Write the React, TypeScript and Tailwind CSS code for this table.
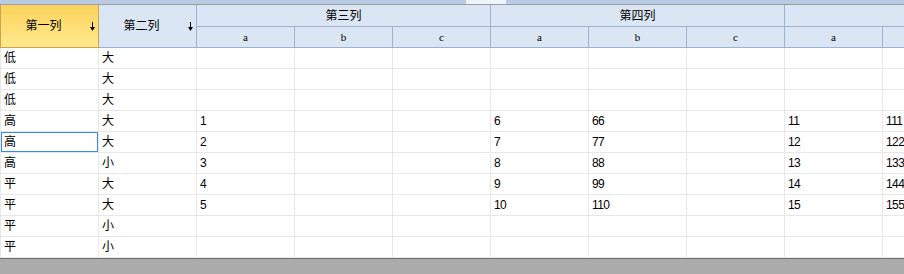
import React from "react";

type Row = {
  level: string;
  size: string;
  cells: string[];
};

const rows: Row[] = [
  { level: "低", size: "大", cells: [] },
  { level: "低", size: "大", cells: [] },
  { level: "低", size: "大", cells: [] },
  { level: "高", size: "大", cells: ["1", "", "", "6", "66", "", "11", "111", ""] },
  { level: "高", size: "大", cells: ["2", "", "", "7", "77", "", "12", "122", ""] },
  { level: "高", size: "小", cells: ["3", "", "", "8", "88", "", "13", "133", ""] },
  { level: "平", size: "大", cells: ["4", "", "", "9", "99", "", "14", "144", ""] },
  { level: "平", size: "大", cells: ["5", "", "", "10", "110", "", "15", "155", ""] },
  { level: "平", size: "小", cells: [] },
  { level: "平", size: "小", cells: [] },
];

// the third band scrolls past the right edge, only its first sub-column shows
const groups = [
  { label: "第三列", subs: ["a", "b", "c"] },
  { label: "第四列", subs: ["a", "b", "c"] },
  { label: "", subs: ["a", "", ""] },
];

const SortArrow = () => (
  <svg width="5" height="9" viewBox="0 0 5 9" className="block">
    <rect x="2" y="0" width="1" height="6" fill="#000" />
    <path d="M0 5h5L2.5 9z" fill="#000" />
  </svg>
);

const SortHeader = ({ label, orange }: { label: string; orange?: boolean }) => (
  <div
    className={`shrink-0 h-full flex items-center border-b border-r ${
      orange
        ? "w-[99px] border-l border-[#d2a24a] bg-gradient-to-b from-[#fdd25a] to-[#ffea8e]"
        : "w-[98px] border-[#9fb2cd] bg-[#dae6f4]"
    }`}
  >
    <span className="flex-1 text-center">{label}</span>
    <span className="w-[12px] flex justify-center">
      <SortArrow />
    </span>
  </div>
);

export default function App() {
  return (
    <div className="w-[904px] h-[274px] overflow-hidden bg-white flex flex-col text-[12px] text-black font-['Liberation_Sans','Noto_Sans_CJK_SC',sans-serif]">
      {/* tab strip above the grid */}
      <div className="h-[4px] flex shrink-0 bg-[#b9cbe2]">
        <div className="w-[466px]" />
        <div className="w-[40px] bg-[#eef5fd]" />
      </div>
      <div className="h-px shrink-0 bg-[#9c9ea2]" />

      <div className="flex flex-col overflow-hidden shrink-0">
        {/* header */}
        <div className="flex h-[43px] shrink-0">
          <SortHeader label="第一列" orange />
          <SortHeader label="第二列" />
          {groups.map((g, gi) => (
            <div
              key={gi}
              className="shrink-0 w-[294px] h-full flex flex-col border-r border-[#9fb2cd] bg-[#dae6f4]"
            >
              <div className="h-[22px] flex items-center justify-center border-b border-[#9fb2cd]">
                {g.label}
              </div>
              <div className="h-[21px] flex border-b border-[#9fb2cd]">
                {g.subs.map((s, i) => (
                  <div
                    key={i}
                    className={`flex items-center justify-center text-[11px] font-['Liberation_Serif',serif] ${
                      i < 2 ? "w-[98px] border-r border-[#9fb2cd]" : "w-[97px]"
                    }`}
                  >
                    {s}
                  </div>
                ))}
              </div>
            </div>
          ))}
        </div>

        {/* body */}
        {rows.map((r, ri) => (
          <div key={ri} className="flex h-[21px] shrink-0">
            <div
              className={`shrink-0 w-[99px] flex items-center px-[3px] border-l border-r border-b border-[#e8e8e8] ${
                ri === 4 ? "shadow-[inset_0_0_0_1px_#3b8be4]" : ""
              }`}
            >
              {r.level}
            </div>
            <div className="shrink-0 w-[98px] flex items-center px-[3px] border-r border-b border-[#e8e8e8]">
              {r.size}
            </div>
            {Array.from({ length: 9 }).map((_, ci) => (
              <div
                key={ci}
                className="shrink-0 w-[98px] flex items-center px-[3px] tracking-[-0.6px] border-r border-b border-[#e8e8e8]"
              >
                {r.cells[ci] ?? ""}
              </div>
            ))}
          </div>
        ))}
      </div>

      <div className="flex-1 border-t border-[#6e6e6e] bg-[#ababab]" />
    </div>
  );
}
